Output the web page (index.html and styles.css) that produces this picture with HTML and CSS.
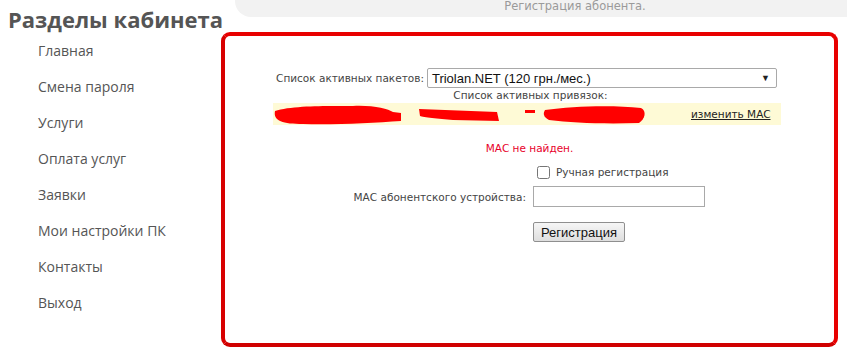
FILE: index.html
```html
<!DOCTYPE html>
<html lang="ru">
<head>
    <meta charset="UTF-8">
    <title>Регистрация абонента</title>
    <link rel="stylesheet" href="styles.css">
</head>
<body>
    <div id="page">
        <div id="sidebar">
            <h1>Разделы кабинета</h1>
            <ul class="menu">
                <li><a href="#">Главная</a></li>
                <li><a href="#">Смена пароля</a></li>
                <li><a href="#">Услуги</a></li>
                <li><a href="#">Оплата услуг</a></li>
                <li><a href="#">Заявки</a></li>
                <li><a href="#">Мои настройки ПК</a></li>
                <li><a href="#">Контакты</a></li>
                <li><a href="#">Выход</a></li>
            </ul>
        </div>
        <div id="main">
            <div class="top-bar">Регистрация абонента.</div>
            <div class="frame">
                <div class="packets">
                    <label for="packet-select">Список активных пакетов:</label>
                    <div class="fake-select" id="packet-select">
                        <span>Triolan.NET (120 грн./мес.)</span>
                        <span class="arrow">&#9660;</span>
                    </div>
                </div>
                <div class="bindings-title">Список активных привязок:</div>
                <div class="binding-row">
                    <svg class="scribble" width="420" height="22" viewBox="0 0 420 22">
                        <path d="M2 8 C20 2 60 3 80 3 C100 2 115 6 120 9 L128 10 L128 18 C100 20 60 22 30 21 C10 21 0 18 2 8 Z" fill="#f00"/>
                        <path d="M146 6 L224 9 L226 18 L180 17 C165 16 150 14 147 13 Z" fill="#f00"/>
                        <path d="M252 7 L262 7 L262 10 L252 10 Z" fill="#f00"/>
                        <path d="M272 7 C300 3 340 2 368 5 C374 8 372 16 366 20 C330 21 300 20 276 17 C270 14 270 10 272 7 Z" fill="#f00"/>
                    </svg>
                    <a href="#" class="change-mac">изменить MAC</a>
                </div>
                <div class="error">МАС не найден.</div>
                <div class="reg-form">
                    <div></div>
                    <label class="manual"><input type="checkbox"> Ручная регистрация</label>
                    <label for="mac-input" class="field-label">МАС абонентского устройства:</label>
                    <input type="text" id="mac-input" class="mac-input">
                    <div></div>
                    <div><button class="reg-button">Регистрация</button></div>
                </div>
            </div>
        </div>
    </div>
</body>
</html>
```

FILE: styles.css
```css
body {
    margin: 0;
    background-color: #fff;
    font-family: "Open Sans", sans-serif;
    color: #555;
}

#page {
    display: grid;
    grid-template-columns: 221px 1fr;
}

#sidebar h1 {
    margin: 4px 0 0 8px;
    font-size: 22px;
    line-height: 30px;
    font-weight: bold;
    color: #555;
    white-space: nowrap;
}

.menu {
    list-style: none;
    margin: 0;
    padding: 0 0 0 38px;
}

.menu li {
    line-height: 36px;
    font-size: 14px;
}

.menu li:first-child {
    margin-top: -1px;
}

.menu a {
    color: #555;
    text-decoration: none;
}

#main {
    padding-right: 9px;
}

.top-bar {
    height: 17px;
    margin: 0 -9px 0 14px;
    padding-left: 68px;
    background-color: #f2f2f2;
    border-bottom-left-radius: 16px;
    text-align: center;
    font-family: "DejaVu Sans", sans-serif;
    font-size: 11.5px;
    line-height: 13px;
    color: #9a9a9a;
}

.frame {
    margin-top: 15px;
    height: 275px;
    border: 4px solid #e80000;
    border-bottom-color: #d00000;
    border-left-color: #d80000;
    border-radius: 9px;
    padding-top: 32px;
    font-family: "DejaVu Sans", sans-serif;
    font-size: 10.5px;
    color: #444;
}

.packets {
    display: flex;
    justify-content: center;
    align-items: center;
    gap: 3px;
    padding-right: 6px;
}

.fake-select {
    width: 350px;
    height: 20px;
    box-sizing: border-box;
    border: 1px solid #a9a9a9;
    border-radius: 2px;
    display: flex;
    align-items: center;
    justify-content: space-between;
    padding: 0 6px 0 4px;
    font-family: "Liberation Sans", sans-serif;
    font-size: 13px;
    color: #111;
}

.fake-select .arrow {
    font-size: 9px;
    color: #222;
}

.bindings-title {
    text-align: center;
    margin-top: 1px;
    line-height: 13px;
    padding-left: 2px;
}

.binding-row {
    position: relative;
    width: 508px;
    height: 22px;
    margin: 1px auto 0;
    background-color: #fefad6;
    display: flex;
    align-items: center;
    justify-content: flex-end;
    transform: translateX(-3px);
}

.scribble {
    position: absolute;
    left: 0;
    top: 0;
}

.change-mac {
    color: #222;
    margin-right: 10px;
    font-size: 10.5px;
}

.error {
    text-align: center;
    color: #e8002a;
    margin-top: 17px;
    line-height: 13px;
}

.reg-form {
    width: 352px;
    margin: 10px auto 0;
    display: grid;
    grid-template-columns: 1fr 1fr;
    column-gap: 7px;
    row-gap: 6px;
    align-items: center;
}

.manual {
    display: flex;
    align-items: center;
    gap: 6px;
    height: 14px;
    margin-left: 4px;
}

.manual input {
    margin: 0;
    width: 13px;
    height: 13px;
}

.field-label {
    text-align: right;
    white-space: nowrap;
}

.mac-input {
    width: 172px;
    height: 21px;
    box-sizing: border-box;
    border: 1px solid #a9a9a9;
    margin: 1px 0;
}

.reg-button {
    margin-top: 8px;
    height: 20px;
    padding: 0 7px;
    font-family: "Liberation Sans", sans-serif;
    font-size: 13px;
    color: #111;
    border: 1px solid #8f8f8f;
    border-radius: 2px;
    background: linear-gradient(#f6f6f6, #dedede);
}
```
